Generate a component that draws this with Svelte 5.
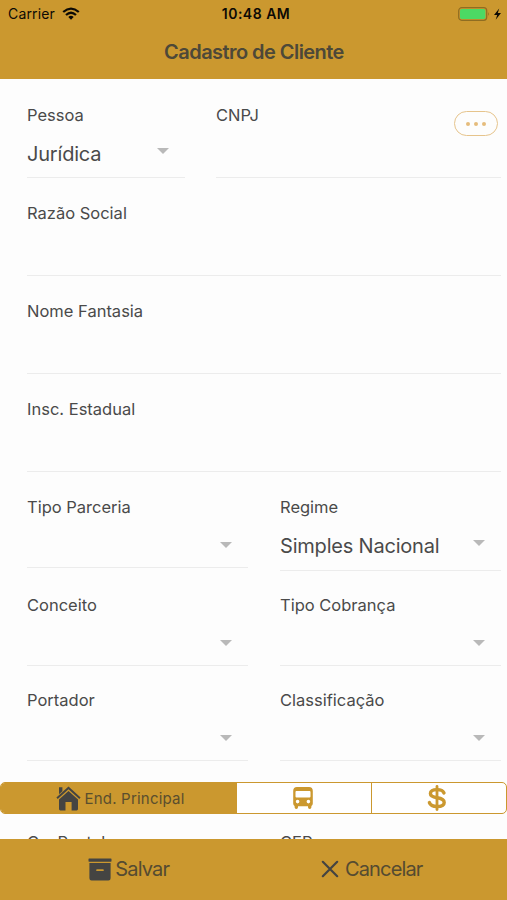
<script lang="ts">
  type Field = {
    label: string;
    value?: string;
    kind: 'text' | 'select';
    more?: boolean;
  };

  type Row = {
    layout: 'narrow' | 'full' | 'half';
    fields: Field[];
  };

  const rows: Row[] = [
    {
      layout: 'narrow',
      fields: [
        { label: 'Pessoa', value: 'Jurídica', kind: 'select' },
        { label: 'CNPJ', kind: 'text', more: true }
      ]
    },
    { layout: 'full', fields: [{ label: 'Razão Social', kind: 'text' }] },
    { layout: 'full', fields: [{ label: 'Nome Fantasia', kind: 'text' }] },
    { layout: 'full', fields: [{ label: 'Insc. Estadual', kind: 'text' }] },
    {
      layout: 'half',
      fields: [
        { label: 'Tipo Parceria', kind: 'select' },
        { label: 'Regime', value: 'Simples Nacional', kind: 'select' }
      ]
    },
    {
      layout: 'half',
      fields: [
        { label: 'Conceito', kind: 'select' },
        { label: 'Tipo Cobrança', kind: 'select' }
      ]
    },
    {
      layout: 'half',
      fields: [
        { label: 'Portador', kind: 'select' },
        { label: 'Classificação', kind: 'select' }
      ]
    }
  ];
</script>

<div class="screen">
  <header>
    <div class="status">
      <div class="carrier">
        <span>Carrier</span>
        <svg width="18" height="13" viewBox="0 0 18 13">
          <g fill="none" stroke="#0c0a05" stroke-width="2.3">
            <path d="M1.2 5 Q9 -1.8 16.8 5" />
            <path d="M4 8 Q9 3.6 14 8" />
          </g>
          <path d="M6.3 10 Q9 7.6 11.7 10 L9 12.7 Z" fill="#0c0a05" />
        </svg>
      </div>
      <time>10:48 AM</time>
      <div class="power">
        <svg width="44" height="14" viewBox="0 0 44 14">
          <rect x="0.7" y="0.7" width="28" height="12.6" rx="3" fill="none" stroke="#8f6d22" stroke-width="1.2" />
          <rect x="2" y="2" width="25.4" height="10" rx="1.7" fill="#4cd964" />
          <path d="M30.2 5 Q32 7 30.2 9 Z" fill="#8f6d22" />
          <path d="M41.2 1.4 L36 7.9 H39.2 L37.7 12.7 L43 6.1 H39.8 Z" fill="#0c0a05" />
        </svg>
      </div>
    </div>
    <h1>Cadastro de Cliente</h1>
  </header>

  <main>
    {#each rows as row}
      <div class="row {row.layout}">
        {#each row.fields as field}
          <div class="field {field.kind}" class:filled={field.value}>
            <span class="label">{field.label}</span>
            <div class="control">
              <span class="value">{field.value ?? ''}</span>
              {#if field.kind === 'select'}
                <i class="arrow"></i>
              {/if}
            </div>
            {#if field.more}
              <button class="more" aria-label="Mais opções"><i></i><i></i><i></i></button>
            {/if}
          </div>
        {/each}
      </div>
    {/each}

    <div class="segment">
      <button class="tab active">
        <svg width="25" height="25" viewBox="0 0 25 25" fill="#444442">
          <path d="M3 1.3 H6.4 V5.2 L3 8.3 Z" />
          <path d="M12.5 0.6 L24.6 11.5 L23.3 12.9 L12.5 3.2 L1.7 12.9 L0.4 11.5 Z" />
          <path d="M12.5 4.9 L22 13.4 V23 Q22 24.4 20.6 24.4 H15.6 V16 H9.5 V24.4 H4.4 Q3 24.4 3 23 V13.4 Z" />
        </svg>
        <span>End. Principal</span>
      </button>
      <button class="tab delivery" aria-label="Entrega">
        <svg width="22" height="24" viewBox="0 0 22 24">
          <path
            fill="#cb982f"
            fill-rule="evenodd"
            d="M5 1 H17 Q20.8 1 20.8 5 V17.5 Q20.8 19.4 19.4 20 V21.3 Q19.4 23 17.7 23 Q16 23 16 21.3 V20.3 H6 V21.3 Q6 23 4.3 23 Q2.6 23 2.6 21.3 V20 Q1.2 19.4 1.2 17.5 V5 Q1.2 1 5 1 Z M4.4 5 Q3.5 5 3.5 6 V10.5 Q3.5 11.6 4.5 11.6 H17.5 Q18.5 11.6 18.5 10.5 V6 Q18.5 5 17.6 5 Z M5.6 13.8 A1.8 1.8 0 1 0 5.6 17.4 A1.8 1.8 0 1 0 5.6 13.8 Z M16.4 13.8 A1.8 1.8 0 1 0 16.4 17.4 A1.8 1.8 0 1 0 16.4 13.8 Z"
          />
        </svg>
      </button>
      <button class="tab billing" aria-label="Cobrança">
        <svg width="20" height="26" viewBox="0 0 20 26" fill="none" stroke="#cb982f" stroke-linecap="round">
          <path d="M10 1.4 V24.6" stroke-width="2.8" />
          <path
            d="M17 8 Q15.6 4.6 10 4.6 Q3.4 4.6 3.4 8.6 Q3.4 11.8 10 12.8 Q17.2 13.8 17.2 17.4 Q17.2 21.5 10 21.5 Q3.8 21.5 2.4 17.6"
            stroke-width="3.4"
          />
        </svg>
      </button>
    </div>

    <div class="row half">
      <div class="field next"><span class="label">Cx. Postal</span></div>
      <div class="field next"><span class="label">CEP</span></div>
    </div>
  </main>

  <footer>
    <button class="action save">
      <svg width="24" height="23" viewBox="0 0 24 23" fill="#444442">
        <rect x="0.5" y="0.5" width="23" height="3.2" rx="0.6" />
        <path
          fill-rule="evenodd"
          d="M1.4 5 H22.6 V20.2 Q22.6 22.4 20.4 22.4 H3.6 Q1.4 22.4 1.4 20.2 Z M9 11.3 Q8.2 11.3 8.2 12.2 Q8.2 13.1 9 13.1 H15 Q15.8 13.1 15.8 12.2 Q15.8 11.3 15 11.3 Z"
        />
      </svg>
      <span>Salvar</span>
    </button>
    <button class="action cancel">
      <svg width="18" height="18" viewBox="0 0 18 18" fill="none" stroke="#444442" stroke-width="2.2" stroke-linecap="round">
        <path d="M1.8 1.8 L16.2 16.2 M16.2 1.8 L1.8 16.2" />
      </svg>
      <span>Cancelar</span>
    </button>
  </footer>
</div>

<style>
  :global(body) {
    margin: 0;
    overflow: hidden;
  }

  .screen {
    --gold: #cb982f;
    --ink: #4a4a4a;
    display: flex;
    flex-direction: column;
    height: 900px;
    overflow: hidden;
    background: #fdfdfd;
    color: var(--ink);
    font-family: Inter, 'Liberation Sans', sans-serif;
  }

  button {
    border: 0;
    padding: 0;
    background: none;
    color: inherit;
    font: inherit;
  }

  svg {
    display: block;
    flex: none;
  }

  header {
    flex: none;
    height: 79px;
    background: var(--gold);
  }

  .status {
    display: grid;
    grid-template-columns: 1fr auto 1fr;
    align-items: center;
    height: 27px;
    padding: 0 5px 0 8px;
    color: #0c0a05;
    font-size: 14px;
  }

  .carrier {
    display: flex;
    align-items: center;
    gap: 7px;
    letter-spacing: 0.15px;
  }

  time {
    padding-left: 2px;
    font-size: 14px;
    font-weight: 600;
    letter-spacing: 0.5px;
  }

  .power {
    display: flex;
    justify-content: flex-end;
  }

  h1 {
    margin: 0;
    padding-left: 1px;
    font-size: 20px;
    font-weight: 600;
    line-height: 50px;
    letter-spacing: -0.55px;
    text-align: center;
    color: #4d4838;
  }

  main {
    flex: 1;
    min-height: 0;
    overflow: hidden;
    padding-top: 1px;
  }

  .row {
    display: grid;
    align-items: start;
    padding: 0 6px 0 27px;
  }

  .row.narrow {
    grid-template-columns: 158px 1fr;
    column-gap: 31px;
  }

  .row.half {
    grid-template-columns: 221px 1fr;
    column-gap: 32px;
  }

  .row.half + .row.half {
    margin-top: -1px;
  }

  .field {
    position: relative;
    box-sizing: border-box;
    height: 98px;
    padding-top: 24px;
    border-bottom: 1px solid #ececec;
  }

  .half .field {
    height: 96px;
  }

  .half .field.filled {
    height: 99px;
  }

  .label {
    display: block;
    font-size: 16.5px;
    line-height: 22px;
  }

  .control {
    display: flex;
    align-items: flex-start;
    justify-content: space-between;
    padding: 14px 16px 0 0;
  }

  .value {
    font-size: 20px;
    line-height: 28px;
    letter-spacing: -0.2px;
    white-space: nowrap;
  }

  .arrow {
    margin-top: 10px;
    border: 6px solid transparent;
    border-top-color: #b9b9b9;
    border-bottom: 0;
  }

  .filled .arrow {
    margin-top: 8px;
  }

  .more {
    position: absolute;
    top: 31px;
    right: 3px;
    display: flex;
    align-items: center;
    justify-content: center;
    gap: 4px;
    box-sizing: border-box;
    width: 44px;
    height: 25px;
    border: 1px solid #e6c48c;
    border-radius: 13px;
  }

  .more i {
    width: 4px;
    height: 4px;
    border-radius: 50%;
    background: #e5bc7c;
  }

  .segment {
    display: grid;
    grid-template-columns: 236px 134px 1fr;
    box-sizing: border-box;
    height: 32px;
    margin-top: 21px;
    border: 1px solid var(--gold);
    border-radius: 5px;
    overflow: hidden;
    background: #fff;
  }

  .tab {
    display: flex;
    align-items: center;
    justify-content: center;
  }

  .tab.active {
    gap: 4px;
    padding-left: 2px;
    background: var(--gold);
    color: #5a4e2e;
    font-size: 15px;
    letter-spacing: 0.2px;
  }

  .tab.delivery {
    padding-right: 2px;
  }

  .tab.billing {
    padding-right: 5px;
    border-left: 1px solid var(--gold);
  }

  .half .field.next {
    height: 40px;
    padding-top: 17px;
    border: 0;
  }

  footer {
    display: grid;
    grid-template-columns: 1fr 1fr;
    flex: none;
    height: 61px;
    background: var(--gold);
  }

  .action {
    display: flex;
    align-items: center;
    justify-content: center;
    padding-bottom: 1px;
    color: #554b31;
    font-size: 20px;
    letter-spacing: -0.85px;
  }

  .save {
    gap: 3px;
    padding-left: 4px;
  }

  .cancel {
    gap: 6px;
    padding-right: 17px;
  }
</style>
